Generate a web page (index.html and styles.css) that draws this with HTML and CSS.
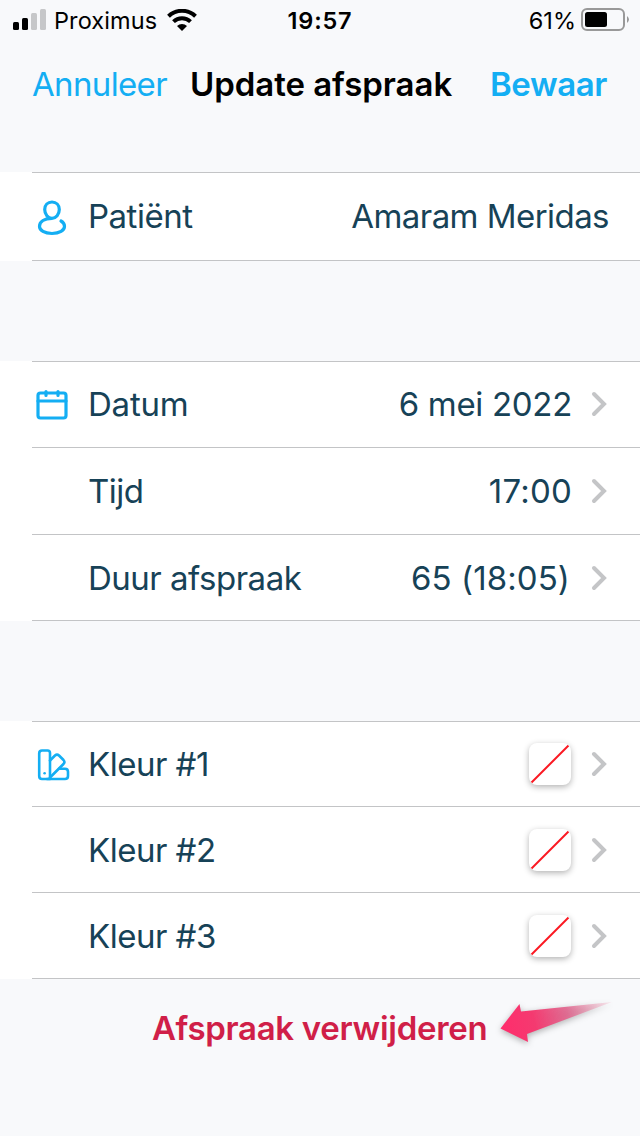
FILE: index.html
```html
<!DOCTYPE html>
<html lang="nl">
<head>
  <meta charset="UTF-8">
  <meta name="viewport" content="width=device-width, initial-scale=1.0">
  <title>Update afspraak</title>
  <link rel="stylesheet" href="styles.css">
</head>
<body>
  <div class="status-bar">
    <div class="status-left">
      <svg class="signal" width="33" height="22" viewBox="0 0 33 22">
        <rect x="0" y="13" width="6" height="8" rx="1.5"/>
        <rect x="9" y="9" width="6" height="12" rx="1.5"/>
        <rect class="off" x="18" y="4" width="6" height="17" rx="1.5"/>
        <rect class="off" x="27" y="0" width="6" height="21" rx="1.5"/>
      </svg>
      <span class="carrier">Proximus</span>
      <svg class="wifi" width="30" height="22" viewBox="0 0 30 22">
        <path d="M1.500 7.200A19.500 19.500 0 0 1 28.500 7.200M6.500 12.600A12.300 12.300 0 0 1 23.500 12.600"/>
        <path class="dot" d="M15 22L10 17A7.400 7.400 0 0 1 20 17Z"/>
      </svg>
    </div>
    <span class="clock">19:57</span>
    <div class="status-right">
      <span class="percent">61%</span>
      <svg width="48" height="24" viewBox="0 0 48 24">
        <rect x="1" y="1" width="42" height="21" rx="5" fill="none" stroke="#999" stroke-width="2"/>
        <rect x="4" y="4" width="22" height="15" rx="2.5"/>
        <path d="M46 8Q50 11.500 46 15Z" fill="#999"/>
      </svg>
    </div>
  </div>

  <div class="nav-bar">
    <a class="cancel">Annuleer</a>
    <h1>Update afspraak</h1>
    <a class="save">Bewaar</a>
  </div>

  <div class="group patient">
    <div class="row">
      <svg class="icon" width="40" height="40" viewBox="0 0 40 40">
        <path d="M20 22.300C16 22.300 12.700 18.300 12.700 13.600C12.700 9 15.800 6 20 6S27.300 9 27.300 13.600C27.300 18.300 24 22.300 20 22.300C12.500 22.300 7.500 25.500 7.500 30.300C7.500 34.500 12.500 37.500 20 37.500S32.500 34.500 32.500 30.300C32.500 28.200 31.200 26.300 29 25"/>
      </svg>
      <span class="label">Patiënt</span>
      <span class="value name">Amaram Meridas</span>
    </div>
  </div>

  <div class="group date">
    <div class="row">
      <svg class="icon" width="40" height="40" viewBox="0 0 40 40">
        <rect x="6" y="9" width="28" height="25" rx="2.500"/>
        <path d="M6 17H34M14 7.500V11.500M26 7.500V11.500"/>
      </svg>
      <span class="label datum">Datum</span>
      <span class="value">6 mei 2022</span>
      <svg class="chevron" width="16" height="26" viewBox="0 0 16 26"><path d="M3 3L13 13L3 23"/></svg>
    </div>
    <div class="row">
      <span class="icon"></span>
      <span class="label">Tijd</span>
      <span class="value time">17:00</span>
      <svg class="chevron" width="16" height="26" viewBox="0 0 16 26"><path d="M3 3L13 13L3 23"/></svg>
    </div>
    <div class="row">
      <span class="icon"></span>
      <span class="label">Duur afspraak</span>
      <span class="value duration">65 (18:05)</span>
      <svg class="chevron" width="16" height="26" viewBox="0 0 16 26"><path d="M3 3L13 13L3 23"/></svg>
    </div>
  </div>

  <div class="group colors">
    <div class="row">
      <svg class="icon swatches" width="40" height="40" viewBox="0 0 40 40">
        <path d="M10 6.500H15.500Q18 6.500 18 9V35H10Q7.200 35 7.200 32V9.500Q7.200 6.500 10 6.500Z"/>
        <path d="M18 16.500L23 11.500Q25 9.700 27 11.500L31.500 16Q33.300 18 31.500 20L18 33.500"/>
        <path d="M27 24.800H33Q36 24.800 36 27.800V32Q36 35 33 35H15"/>
        <circle cx="12.600" cy="29.300" r="1.300"/>
      </svg>
      <span class="label">Kleur #1</span>
      <svg class="swatch" width="42" height="42" viewBox="0 0 42 42"><path d="M2.500 39.500L39.500 2.500"/></svg>
      <svg class="chevron" width="16" height="26" viewBox="0 0 16 26"><path d="M3 3L13 13L3 23"/></svg>
    </div>
    <div class="row">
      <span class="icon"></span>
      <span class="label">Kleur #2</span>
      <svg class="swatch" width="42" height="42" viewBox="0 0 42 42"><path d="M2.500 39.500L39.500 2.500"/></svg>
      <svg class="chevron" width="16" height="26" viewBox="0 0 16 26"><path d="M3 3L13 13L3 23"/></svg>
    </div>
    <div class="row">
      <span class="icon"></span>
      <span class="label">Kleur #3</span>
      <svg class="swatch" width="42" height="42" viewBox="0 0 42 42"><path d="M2.500 39.500L39.500 2.500"/></svg>
      <svg class="chevron" width="16" height="26" viewBox="0 0 16 26"><path d="M3 3L13 13L3 23"/></svg>
    </div>
  </div>

  <div class="footer">
    <a class="delete">Afspraak verwijderen</a>
    <svg class="arrow" width="120" height="50" viewBox="0 0 120 50">
      <defs>
        <linearGradient id="fade" gradientUnits="userSpaceOnUse" x1="5" y1="32" x2="116" y2="6">
          <stop offset="0" stop-color="#ff2d6c"/>
          <stop offset="0.300" stop-color="#f43a70"/>
          <stop offset="0.600" stop-color="#e0648d" stop-opacity="0.900"/>
          <stop offset="1" stop-color="#f0a0b8" stop-opacity="0.200"/>
        </linearGradient>
      </defs>
      <path d="M4.500 32.500L23.500 8L25 15.500L116 6L31 38L32 46Z" fill="url(#fade)"/>
    </svg>
  </div>
</body>
</html>
```

FILE: styles.css
```css
body {
  margin: 0;
  height: 1136px;
  background-color: #f8f9fb;
  font-family: Inter, "Liberation Sans", sans-serif;
  font-size: 33px;
  color: #174257;
  overflow: hidden;
  white-space: nowrap;
}

.status-bar {
  display: grid;
  grid-template-columns: 1fr auto 1fr;
  align-items: center;
  height: 40px;
  padding: 0 11px 0 13px;
  font-size: 23.5px;
  color: #000;
}

.status-left, .status-right {
  display: flex;
  align-items: center;
}

.status-right {
  justify-content: flex-end;
  gap: 5px;
}

.signal .off {
  fill: #c6c7c9;
}

.carrier {
  margin: 0 10px 0 8px;
  letter-spacing: 0.1px;
}

.wifi path {
  fill: none;
  stroke: #000;
  stroke-width: 4;
}

.wifi .dot {
  fill: #000;
  stroke: none;
}

.clock {
  margin-right: 2px;
  font-weight: 600;
  letter-spacing: 0.8px;
}

.nav-bar {
  display: flex;
  align-items: center;
  height: 88px;
  padding: 0 33px 0 32px;
}

.nav-bar a {
  color: #14aef3;
}

.nav-bar .cancel {
  letter-spacing: -0.65px;
}

.nav-bar .save {
  margin-left: auto;
  font-weight: 600;
  letter-spacing: -0.4px;
}

h1 {
  margin: 0 0 0 23px;
  font-size: 33px;
  font-weight: 600;
  letter-spacing: -0.05px;
  color: #000;
}

.group {
  background-color: #fff;
}

.row {
  display: flex;
  align-items: center;
  box-sizing: border-box;
  height: 86px;
  margin-left: 32px;
  padding-right: 33px;
  border-top: 1px solid #c3c4c6;
}

.row:last-child {
  height: 87px;
  border-bottom: 1px solid #c3c4c6;
}

.patient {
  margin-top: 44px;
}

.patient .row {
  height: 89px;
  padding-right: 31px;
  padding-bottom: 2px;
}

.date {
  margin-top: 100px;
}

.date .row:first-child {
  padding-bottom: 2px;
}

.date .row:nth-child(2) {
  height: 87px;
}

.colors {
  margin-top: 100px;
}

.colors .row:first-child {
  height: 85px;
}

.icon {
  width: 40px;
  margin-right: 16px;
  fill: none;
  stroke: #14aef3;
  stroke-width: 3.2;
  stroke-linecap: round;
  stroke-linejoin: round;
}

.swatches {
  stroke-width: 2.6;
}

.swatches circle {
  fill: #14aef3;
  stroke: none;
}

.label {
  flex: 1;
  letter-spacing: -0.5px;
}

.datum {
  letter-spacing: -0.2px;
}

.value {
  letter-spacing: -0.3px;
}

.name {
  letter-spacing: -0.55px;
}

.time {
  letter-spacing: 0.2px;
}

.duration {
  margin-right: 2px;
  letter-spacing: 0.1px;
}

.chevron {
  margin-left: 19px;
  fill: none;
  stroke: #c4c5c7;
  stroke-width: 4;
  stroke-linecap: round;
}

.swatch {
  margin-right: 1px;
  border-radius: 8px;
  background-color: #fff;
  box-shadow: 0 2px 6px rgba(0, 0, 0, 0.3);
  stroke: #fb1822;
  stroke-width: 2;
}

.footer {
  display: flex;
  align-items: center;
  height: 98px;
  padding-left: 152px;
}

.delete {
  font-weight: 600;
  letter-spacing: -0.3px;
  color: #d01f48;
}

.arrow {
  margin: 0 0 15px 9px;
  filter: drop-shadow(0 2px 3px rgba(0, 0, 0, 0.3));
}
```
